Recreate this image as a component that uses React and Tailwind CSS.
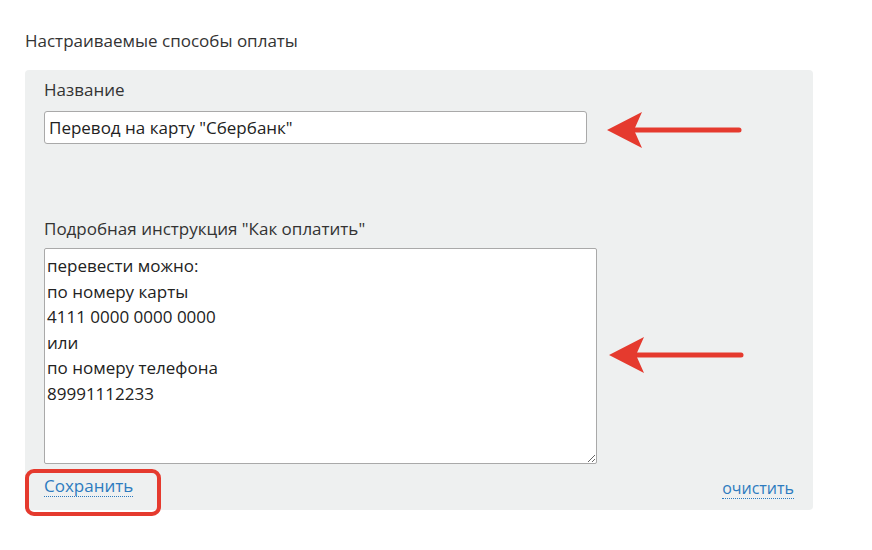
import React from 'react';

const FONT = { fontFamily: '"Open Sans", Lato, sans-serif' };

const INSTRUCTION = `перевести можно:
по номеру карты
4111 0000 0000 0000
или
по номеру телефона
89991112233`;

function Arrow({ className }) {
  return (
    <svg className={className} width="140" height="40" viewBox="0 0 140 40">
      <path d="M28 20 H132" stroke="#e53a2e" strokeWidth="5" strokeLinecap="round" />
      <path d="M0 20 L35 2 L27 20 L35 38 Z" fill="#e53a2e" />
    </svg>
  );
}

export default function App() {
  return (
    <div className="w-[872px] h-[550px] bg-white text-[#333] relative" style={FONT}>
      <div className="px-[25px] pt-[30px]">
        <h3 className="text-[17px] leading-[22px] mb-[18px]">Настраиваемые способы оплаты</h3>

        <div className="w-[788px] bg-[#eef0f0] rounded-[4px] pl-[19px] pt-[9px] pb-[13px]">
          <label className="block text-[17px] leading-[22px] mb-[10px]">Название</label>
          <input
            className="block w-[543px] h-[33px] bg-white border border-[#a9a9a9] rounded-[3px] px-[4px] text-[17px] text-[#222] outline-none"
            style={FONT}
            defaultValue={'Перевод на карту "Сбербанк"'}
          />

          <label className="block text-[17px] leading-[22px] mt-[74px] mb-[8px]">
            Подробная инструкция "Как оплатить"
          </label>
          <textarea
            className="block w-[553px] h-[216px] bg-white border border-[#a9a9a9] rounded-[2px] px-[2px] py-[4px] text-[17px] leading-[25.6px] text-[#222] outline-none"
            style={FONT}
            defaultValue={INSTRUCTION}
          />

          <div className="flex justify-between items-end pr-[19px] mt-[12px]">
            <a className="text-[17px] leading-[20px] text-[#2d7bbf] border-b border-dotted border-[#2d7bbf]">Сохранить</a>
            <a className="text-[16px] leading-[20px] text-[#2d7bbf] border-b border-dotted border-[#2d7bbf] mb-[-2px]">очистить</a>
          </div>
        </div>
      </div>

      {/* annotations */}
      <div className="absolute left-[25px] top-[469px] w-[136px] h-[47px] border-[4px] border-[#e53a2e] rounded-[9px]" />
      <Arrow className="absolute left-[607px] top-[110px]" />
      <Arrow className="absolute left-[609px] top-[335px]" />
    </div>
  );
}
